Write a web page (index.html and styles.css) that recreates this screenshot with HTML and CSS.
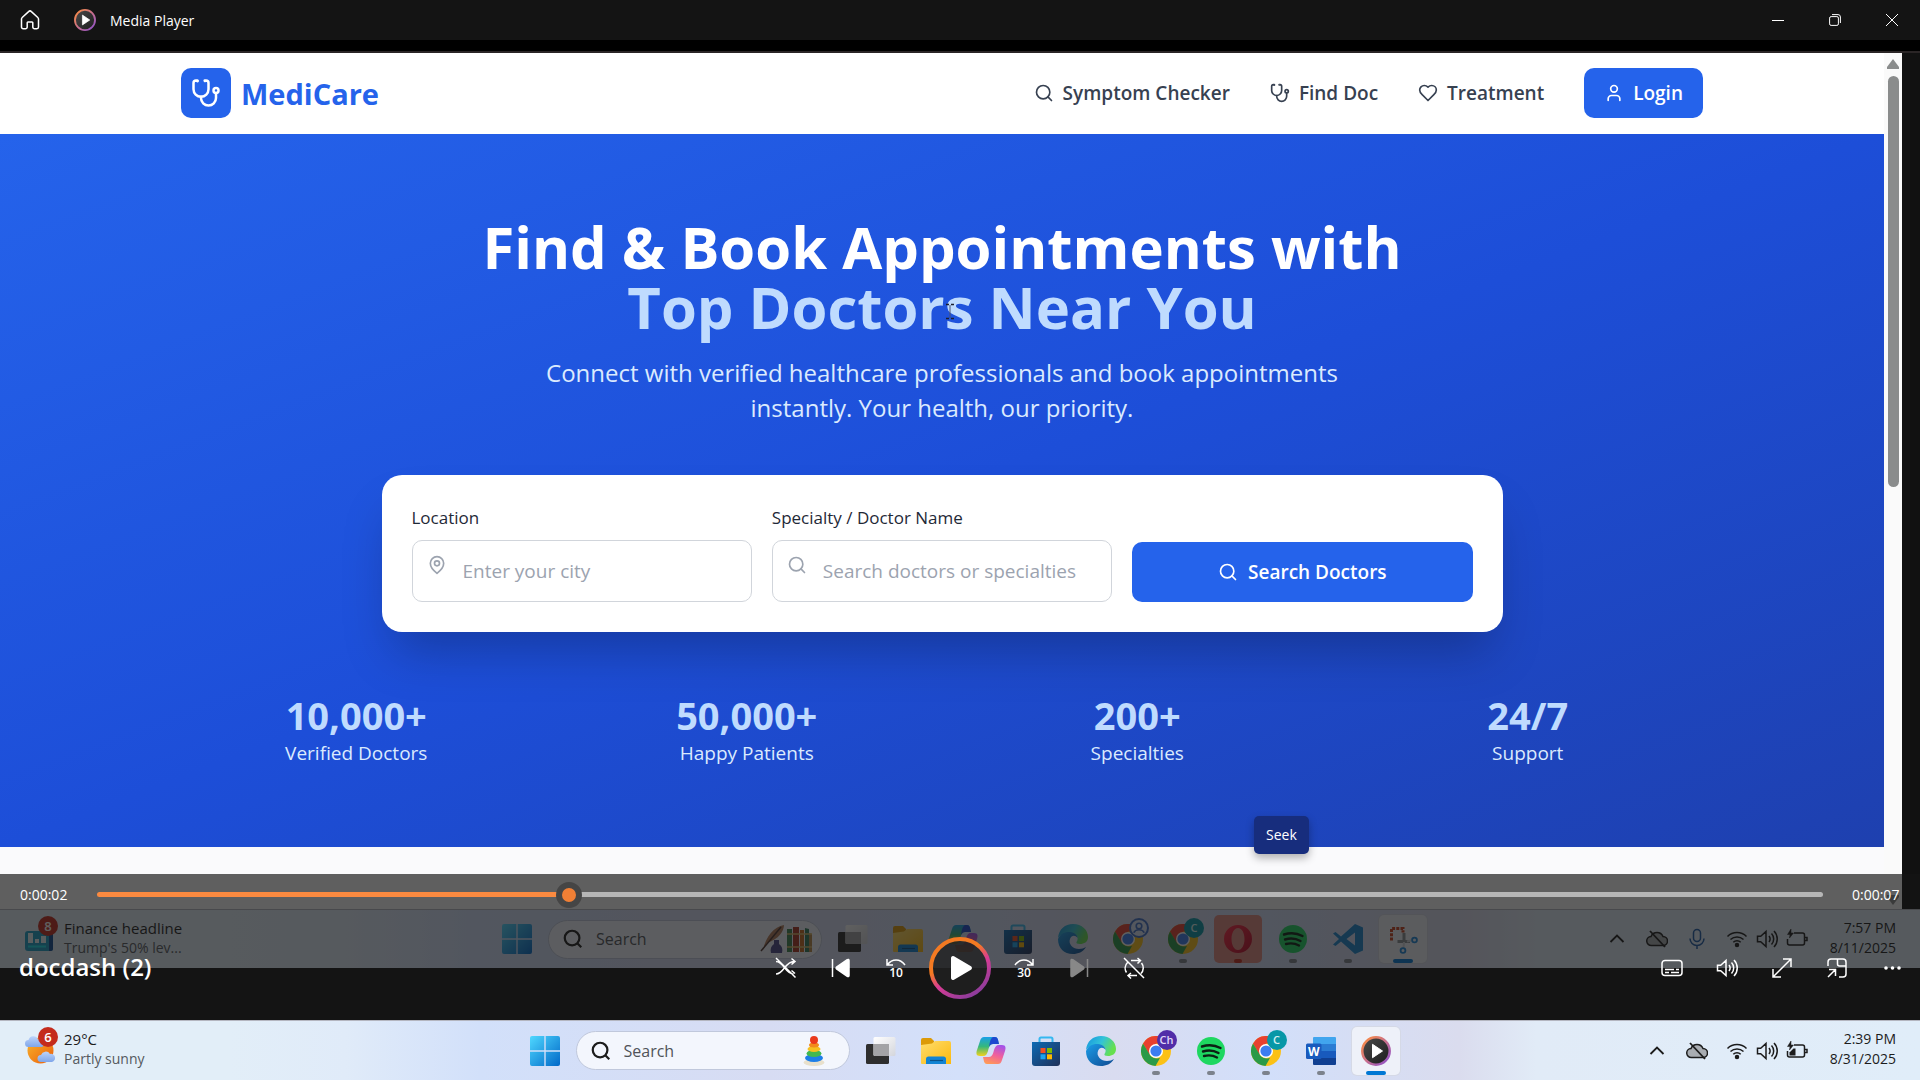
FILE: index.html
```html
<!DOCTYPE html>
<html lang="en">
<head>
<meta charset="utf-8">
<title>Media Player</title>
<link rel="stylesheet" href="styles.css">
</head>
<body>
<svg class="sprite" aria-hidden="true">
  <defs>
    <linearGradient id="g-ring" x1="0" y1="0" x2="1" y2="1"><stop offset="0" stop-color="#ff8f3c"/><stop offset=".5" stop-color="#c9708c"/><stop offset="1" stop-color="#8a4fd0"/></linearGradient>
    <linearGradient id="g-dark" x1="0" y1="0" x2="1" y2="1"><stop offset="0" stop-color="#4a4a4a"/><stop offset="1" stop-color="#1c1c1c"/></linearGradient>
    <linearGradient id="g-playtop" x1=".1" y1="0" x2=".7" y2="1"><stop offset="0" stop-color="#f47a22"/><stop offset=".4" stop-color="#f47a22"/><stop offset=".62" stop-color="#d83c94"/><stop offset="1" stop-color="#8c3c9c"/></linearGradient>
    <linearGradient id="g-win" x1="0" y1="0" x2="1" y2="1"><stop offset="0" stop-color="#4fd8ff"/><stop offset="1" stop-color="#0068c8"/></linearGradient>
    <linearGradient id="g-fold" x1="0" y1="0" x2="1" y2="1"><stop offset="0" stop-color="#ffdd6e"/><stop offset="1" stop-color="#fbb90e"/></linearGradient>
    <linearGradient id="g-store" x1="0" y1="0" x2="1" y2="1"><stop offset="0" stop-color="#0d6ab4"/><stop offset="1" stop-color="#203058"/></linearGradient>
    <linearGradient id="g-edge1" x1="0" y1="0" x2="1" y2=".4"><stop offset="0" stop-color="#1593e0"/><stop offset=".55" stop-color="#33c3d8"/><stop offset="1" stop-color="#66e04e"/></linearGradient>
    <linearGradient id="g-edge2" x1="0" y1="0" x2="1" y2="1"><stop offset="0" stop-color="#1b9de8"/><stop offset="1" stop-color="#0f4a92"/></linearGradient>
    <linearGradient id="g-cop1" x1="0" y1="0" x2="0" y2="1"><stop offset="0" stop-color="#19a0e8"/><stop offset=".5" stop-color="#36b87c"/><stop offset="1" stop-color="#f2d21c"/></linearGradient>
    <linearGradient id="g-cop2" x1=".7" y1="0" x2=".3" y2="1"><stop offset="0" stop-color="#a552e8"/><stop offset=".5" stop-color="#f0609c"/><stop offset="1" stop-color="#ff9a58"/></linearGradient>
    <linearGradient id="g-sun" x1="0" y1="0" x2="1" y2="1"><stop offset="0" stop-color="#f8b62c"/><stop offset="1" stop-color="#ec5e0c"/></linearGradient>
    <linearGradient id="g-cloud" x1="0" y1="0" x2="0" y2="1"><stop offset="0" stop-color="#bcd3fa"/><stop offset="1" stop-color="#7fa6ea"/></linearGradient>
    <linearGradient id="g-opera" x1="0" y1="0" x2="1" y2="1"><stop offset="0" stop-color="#ff2440"/><stop offset="1" stop-color="#b80a28"/></linearGradient>
    <linearGradient id="g-pane" x1="0" y1="0" x2="1" y2="1"><stop offset="0" stop-color="#ffffff"/><stop offset="1" stop-color="#d4d6dc"/></linearGradient>
  </defs>

  <symbol id="i-steth" viewBox="0 0 24 24"><path d="M4.8 2.3A.3.3 0 1 0 5 2H4a2 2 0 0 0-2 2v5a6 6 0 0 0 12 0V4a2 2 0 0 0-2-2h-1a.2.2 0 1 0 .3.3"/><path d="M8 15v1a6 6 0 0 0 12 0v-4"/><circle cx="20" cy="10" r="2"/></symbol>
  <symbol id="i-search" viewBox="0 0 24 24"><circle cx="11" cy="11" r="8"/><path d="m21 21-4.3-4.3"/></symbol>
  <symbol id="i-heart" viewBox="0 0 24 24"><path d="M19 14c1.49-1.46 3-3.21 3-5.5A5.5 5.5 0 0 0 16.500 3c-1.76 0-3 .5-4.500 2-1.500-1.500-2.740-2-4.500-2A5.500 5.500 0 0 0 2 8.500c0 2.300 1.500 4.050 3 5.500l7 7Z"/></symbol>
  <symbol id="i-user" viewBox="0 0 24 24"><path d="M19 21v-2a4 4 0 0 0-4-4H9a4 4 0 0 0-4 4v2"/><circle cx="12" cy="7" r="4"/></symbol>
  <symbol id="i-pin" viewBox="0 0 24 24"><path d="M20 10c0 6-8 12-8 12s-8-6-8-12a8 8 0 0 1 16 0Z"/><circle cx="12" cy="10" r="3"/></symbol>

  <symbol id="i-home" viewBox="0 0 20 20"><path d="M8.600 1.600a2 2 0 0 1 2.800 0l6.400 5.900a2 2 0 0 1 .7 1.500v8a1.700 1.700 0 0 1-1.700 1.700h-2.300a1.700 1.700 0 0 1-1.700-1.700v-4.200a.8.800 0 0 0-.8-.8H8a.8.800 0 0 0-.8.800V17a1.700 1.700 0 0 1-1.700 1.700H3.200A1.700 1.700 0 0 1 1.500 17V9a2 2 0 0 1 .7-1.500Z"/></symbol>
  <symbol id="i-media" viewBox="0 0 30 30"><circle cx="15" cy="15" r="13.700" fill="url(#g-dark)" stroke="url(#g-ring)" stroke-width="2.500"/><path d="M11.500 8.300v13.400L21.500 15Z" fill="#fff" stroke="#fff" stroke-linejoin="round"/></symbol>

  <symbol id="i-shuffle" viewBox="0 0 22 22"><path d="M1 4.500c8 0 9 12.500 17.500 12.500M1 17c8 0 9-12.500 18-12.500M16.500 1.500l3.500 3-3.500 3M16.500 13.500l3.500 3M1 1l19.500 19.500"/></symbol>
  <symbol id="i-prev" viewBox="0 0 22 22"><path d="M2.500 2v18"/><path d="M19 3.500v15a1 1 0 0 1-1.700.8L6.500 11.900a1.200 1.200 0 0 1 0-1.800L17.300 2.700a1 1 0 0 1 1.700.8Z" fill="currentColor"/></symbol>
  <symbol id="i-repeat" viewBox="0 0 22 22"><path d="M8 3.500h9M14.500 1l3 2.500-3 3M14 18.500H5.500M8 16l-3 2.500 3 3M4.500 5.500a8 8 0 0 0-1 10M18.500 6a8 8 0 0 1-.5 10.500M1 1l20 20"/></symbol>
  <symbol id="i-subs" viewBox="0 0 22 22"><rect x="1" y="3.500" width="20" height="15" rx="3"/><path d="M4 12.500h9M15 12.500h3M4 15.500h4M10 15.500h8"/></symbol>
  <symbol id="i-vol" viewBox="0 0 22 22"><path d="M1.500 8.300h3.200L10 3.500v15l-5.300-4.800H1.500ZM13 8a5 5 0 0 1 0 6M15.500 5.500a8 8 0 0 1 0 11M18 3a11.500 11.500 0 0 1 0 16"/></symbol>
  <symbol id="i-full" viewBox="0 0 22 22"><path d="M12 2h8v8M2 12v8h8M20 2L2 20"/></symbol>
  <symbol id="i-mini" viewBox="0 0 22 22"><path d="M2 9V5a3 3 0 0 1 3-3h12a3 3 0 0 1 3 3v12a3 3 0 0 1-3 3h-4M11.500 2v5a2 2 0 0 0 2 2H20M3 12.500h6.500V19M9.500 12.500L2 20"/></symbol>
  <symbol id="i-dots" viewBox="0 0 22 22"><g fill="currentColor" stroke="none"><circle cx="5" cy="11" r="1.800"/><circle cx="11.500" cy="11" r="1.800"/><circle cx="18" cy="11" r="1.800"/></g></symbol>

  <symbol id="t-win" viewBox="0 0 30 30"><path fill="url(#g-win)" d="M2 0h12.300v14.300H0V2a2 2 0 0 1 2-2ZM15.700 0H28a2 2 0 0 1 2 2v12.300H15.700ZM0 15.700h14.300V30H2a2 2 0 0 1-2-2ZM15.700 15.700H30V28a2 2 0 0 1-2 2H15.700Z"/></symbol>
  <symbol id="t-task" viewBox="0 0 30 30"><rect x="0" y="8" width="23" height="20" rx="1.500" fill="#2e2e2e"/><rect x="7.500" y="1" width="22" height="19" rx="1.500" fill="url(#g-pane)"/><path d="M7.500 8H23v12H9a1.500 1.500 0 0 1-1.500-1.500Z" fill="#a3a3a6"/></symbol>
  <symbol id="t-folder" viewBox="0 0 30 30"><path d="M0 4a2 2 0 0 1 2-2h8l3 3v5H0Z" fill="#dc9a08"/><path d="M0 9l11-1.500 3-2.500h14a2 2 0 0 1 2 2v21H1a1 1 0 0 1-1-1Z" fill="url(#g-fold)"/><path d="M5 28v-5a2.500 2.500 0 0 1 2.500-2.500h15A2.500 2.500 0 0 1 25 23v5Z" fill="#1284d4"/><path d="M9 24.500h13" stroke="#0b5288" stroke-width="1.200"/></symbol>
  <symbol id="t-copilot" viewBox="0 0 30 30"><path d="M8 1h11c3 0 3 3 4 7h-6c-3 0-4 3-5 7-1 3-2 5-5 5H4c-4 0-4-3-3-6l3-9c1-3 2-4 4-4Z" fill="url(#g-cop1)"/><path d="M17 1h2c3 0 3 3 4 7h-6c-2 0-3 1-4 3 1-5 1-8 4-10Z" fill="#1c48d0"/><path d="M22 28H11c-3 0-3-3-4-7h6c3 0 4-3 5-7 1-3 2-5 5-5h3c4 0 4 3 3 6l-3 9c-1 3-2 4-4 4Z" fill="url(#g-cop2)"/></symbol>
  <symbol id="t-store" viewBox="0 0 30 30"><path d="M8.500 6V3A1.500 1.500 0 0 1 10 1.500h10A1.500 1.500 0 0 1 21.500 3v3" fill="none" stroke="#35b8f0" stroke-width="2"/><path d="M1 6h28v21a3 3 0 0 1-3 3H4a3 3 0 0 1-3-3Z" fill="url(#g-store)"/><path fill="#f25022" d="M9.500 12h5v5h-5z"/><path fill="#7fba00" d="M16 12h5v5h-5z"/><path fill="#1ba4f0" d="M9.500 18.300h5v5h-5z"/><path fill="#ffb900" d="M16 18.300h5v5h-5z"/></symbol>
  <symbol id="t-edge" viewBox="0 0 30 30"><path d="M0 14C1 5 7 0 15 0c9 0 15 6 15 13 0 5-4 7-8 7-3 0-4-1-3.500-2 3-4 0-9-6-9C7 9 2 11 0 14Z" fill="url(#g-edge1)"/><path d="M0 15c2-5 7-7.500 12-7 4.500.500 7.500 3 7.500 6-2-3-6-3-7.500 1-2 5 3 10 9 10 3 0 5-1 7-2-3 5-8 7-13 7C6 30 0 24 0 15Z" fill="url(#g-edge2)"/></symbol>
  <symbol id="t-chrome" viewBox="0 0 30 30"><circle cx="15" cy="15" r="15" fill="#fbc116"/><path d="M2 7.500A15 15 0 0 1 28 7.500H15L8.500 19Z" fill="#e8402f"/><path d="M2 7.500l7 11.500c2 3 6 4 10 3L14.500 30A15 15 0 0 1 2 7.500Z" fill="#2a9a48"/><circle cx="15" cy="15" r="7" fill="#fff"/><circle cx="15" cy="15" r="5.600" fill="#3b7df0"/></symbol>
  <symbol id="t-spotify" viewBox="0 0 30 30"><circle cx="15" cy="15" r="14" fill="#1ed760"/><path d="M6 10.500c6-2 13-1.500 18.500 1.500M7 15.500c5-1.500 11-1 15.500 1.500M8 20c4-1 9-.8 13 1.500" fill="none" stroke="#0c2014" stroke-width="2.400" stroke-linecap="round"/></symbol>
  <symbol id="t-opera" viewBox="0 0 30 30"><path fill-rule="evenodd" fill="url(#g-opera)" d="M15 1a14 14 0 1 1 0 28a14 14 0 1 1 0-28ZM15 4c-4 0-6.500 5-6.500 11S11 26 15 26s6.500-5 6.500-11S19 4 15 4Z"/></symbol>
  <symbol id="t-vscode" viewBox="0 0 30 30"><path fill="#1a86d0" d="M22 0l8 3.500v23L22 30 8 17.500 2.500 22 0 20.500 6 15 0 9.500 2.500 8 8 12.500ZM22 8.500L13.500 15 22 21.500Z" fill-rule="evenodd"/></symbol>
  <symbol id="t-snip" viewBox="0 0 30 30"><path d="M3.500 16.500v-12h11.500v4" fill="none" stroke="#c8401c" stroke-width="3" stroke-dasharray="3 1.200"/><path d="M16 9v9M9.500 17.500H22" fill="none" stroke="#8a8f94" stroke-width="3"/><path d="M16 18l-.5 6M19 17.500l4-1" stroke="#d0d4d8" stroke-width="2"/><circle cx="15" cy="26.500" r="2.400" fill="none" stroke="#1b86d8" stroke-width="1.800"/><circle cx="26.500" cy="16" r="2.400" fill="none" stroke="#1b86d8" stroke-width="1.800"/></symbol>
  <symbol id="t-finance" viewBox="0 0 30 30"><rect x="0" y="8" width="28" height="20" rx="3" fill="#1aa0c8"/><path d="M24 8h2a2 2 0 0 1 2 2v16a2 2 0 0 1-2 2h-2Z" fill="#0d4a94"/><path d="M3 10h5v10H3zM10 16h4v4h-4zM16 13h5v7h-5z" fill="#e8f4f8"/><path d="M3 23.500h18" stroke="#18e0e8" stroke-width="2"/></symbol>
  <symbol id="t-weather" viewBox="0 0 30 30"><circle cx="15.500" cy="16.500" r="13" fill="url(#g-sun)"/><path d="M3.500 13a3.500 3.500 0 0 1 0-7 5 5 0 0 1 9.500-.5A4 4 0 0 1 17 13Z" fill="url(#g-cloud)"/><path d="M16 28a3.500 3.500 0 0 1 0-7 5 5 0 0 1 9-1 4 4 0 0 1 2 8Z" fill="url(#g-cloud)"/></symbol>
  <symbol id="t-toy" viewBox="0 0 22 30"><ellipse cx="11" cy="26.500" rx="10.500" ry="3.500" fill="#e8e0cc"/><ellipse cx="11" cy="22" rx="9" ry="4" fill="#1c7ee8"/><ellipse cx="11" cy="17.500" rx="7.500" ry="3.500" fill="#42b850"/><ellipse cx="11" cy="13" rx="6.500" ry="3" fill="#f5c020"/><ellipse cx="11" cy="9" rx="5" ry="2.500" fill="#f28a1c"/><circle cx="11" cy="4" r="4" fill="#ea3a1c"/></symbol>
  <symbol id="t-books" viewBox="0 0 52 30"><path d="M3 26C6 12 14 3 24 1c0 6-5 14-17 18Z" fill="#b07a58"/><path d="M1 27L21 3" stroke="#4c3430" stroke-width="1.500"/><path d="M14 16h5v4c3 2 4 5 3 9H11c-1-4 0-7 3-9Z" fill="#4d4888"/><path fill="#3c8450" d="M27 5h5v23h-5z"/><path fill="#a83420" d="M33 3h6v25h-6z"/><path fill="#c8681c" d="M40 6h4v22h-4z"/><path fill="#2f7a58" d="M45 4l4 1v23h-4z"/><path fill="#b88848" d="M49 9l3 1v18h-3z"/><path d="M27 10h25M27 23h25" stroke="#d8b868" stroke-width="1.500"/></symbol>

  <symbol id="s-chev" viewBox="0 0 22 22"><path d="M4.500 14L11 7.500 17.500 14" stroke-width="1.800"/></symbol>
  <symbol id="s-cloud" viewBox="0 0 22 22"><path d="M5.500 17.500a4.500 4.500 0 0 1-.5-9 6.500 6.500 0 0 1 12 0 4.500 4.500 0 0 1 0 9Z" fill="#a9adb2"/><path d="M4 3l15 16" stroke-width="1.800"/></symbol>
  <symbol id="s-mic" viewBox="0 0 22 22"><rect x="7.500" y="1.500" width="7" height="12" rx="3.500"/><path d="M4 10.500a7 7 0 0 0 14 0M11 17.500v3.500"/></symbol>
  <symbol id="s-wifi" viewBox="0 0 22 22"><path d="M1.500 8.500a13.500 13.500 0 0 1 19 0M4.500 11.500a9.500 9.500 0 0 1 13 0M7.300 14.300a5.500 5.500 0 0 1 7.400 0"/><circle cx="11" cy="17" r="1.500" fill="currentColor"/></symbol>
  <symbol id="s-batt" viewBox="0 0 22 22"><path d="M8 5h8.500a2 2 0 0 1 2 2v8a2 2 0 0 1-2 2h-13a2 2 0 0 1-2-2v-4M19 9.500h2v3h-2"/><path d="M5 1L1.500 6.500H4L3.500 10 7.500 5H5Z" fill="currentColor" stroke-width=".5"/></symbol>
</svg>

<header class="titlebar">
  <button class="tb-home" aria-label="Home"><svg class="ln s20"><use href="#i-home"/></svg></button>
  <svg class="s22"><use href="#i-media"/></svg>
  <span class="tb-name">Media Player</span>
  <div class="tb-win">
    <button aria-label="Minimize"><svg viewBox="0 0 12 12" class="ln s12"><path d="M0 6.500h12"/></svg></button>
    <button aria-label="Restore"><svg viewBox="0 0 12 12" class="ln s12"><rect x=".6" y="2.600" width="8.800" height="8.800" rx="1.500"/><path d="M3 .6h6a2.400 2.400 0 0 1 2.400 2.400v6"/></svg></button>
    <button aria-label="Close"><svg viewBox="0 0 12 12" class="ln s12"><path d="M0 0l12 12M12 0L0 12"/></svg></button>
  </div>
</header>

<main class="stage">
  <div class="video">
    <div class="browser">
      <div class="page">
        <header class="site-head">
          <div class="wrap head-row">
            <a class="brand" href="#"><span class="brand-box"><svg class="lu s30"><use href="#i-steth"/></svg></span>MediCare</a>
            <nav class="nav">
              <a href="#"><svg class="lu s20"><use href="#i-search"/></svg>Symptom Checker</a>
              <a href="#"><svg class="lu s20"><use href="#i-steth"/></svg>Find Doc</a>
              <a href="#"><svg class="lu s20"><use href="#i-heart"/></svg>Treatment</a>
              <button class="login"><svg class="lu s20"><use href="#i-user"/></svg>Login</button>
            </nav>
          </div>
        </header>
        <section class="hero">
          <div class="wrap">
            <h1>Find &amp; Book Appointments with<span>Top Doctors Near You</span></h1>
            <p class="lead">Connect with verified healthcare professionals and book appointments instantly. Your health, our priority.</p>
            <form class="finder">
              <div class="field"><label for="city">Location</label>
                <div class="box"><svg class="lu s20"><use href="#i-pin"/></svg><input id="city" type="text" placeholder="Enter your city"></div></div>
              <div class="field"><label for="doc">Specialty / Doctor Name</label>
                <div class="box"><svg class="lu s20"><use href="#i-search"/></svg><input id="doc" type="text" placeholder="Search doctors or specialties"></div></div>
              <button class="go" type="button"><svg class="lu s20"><use href="#i-search"/></svg>Search Doctors</button>
            </form>
            <dl class="stats">
              <div><dt>10,000+</dt><dd>Verified Doctors</dd></div>
              <div><dt>50,000+</dt><dd>Happy Patients</dd></div>
              <div><dt>200+</dt><dd>Specialties</dd></div>
              <div><dt>24/7</dt><dd>Support</dd></div>
            </dl>
          </div>
          <svg class="ibeam" viewBox="0 0 8 17"><path d="M4 2v13" stroke="#4a5270"/><path d="M0 1.500h3M5 1.500h3M0 15.500h3M5 15.500h3" stroke="#1c2030" stroke-width="1.500"/></svg>
        </section>
      </div>
      <div class="scroll">
        <svg viewBox="0 0 12 10"><path d="M6 0l6 8v2H0V8Z"/></svg>
        <i></i>
        <svg viewBox="0 0 12 10" class="down"><path d="M6 10l6-8V0H0v2Z"/></svg>
      </div>
      <div class="edge"></div>
    </div>

    <div class="taskbar recorded">
      <div class="widget"><svg class="s30"><use href="#t-finance"/></svg><b class="badge">8</b><p><span>Finance headline</span><small>Trump's 50% lev...</small></p></div>
      <div class="apps">
        <button aria-label="Start"><svg class="s30"><use href="#t-win"/></svg></button>
        <label class="find"><svg class="s22 mag"><use href="#i-search"/></svg><input type="search" placeholder="Search" aria-label="Search"><svg class="books"><use href="#t-books"/></svg></label>
        <button aria-label="Task view"><svg class="s30"><use href="#t-task"/></svg></button>
        <button aria-label="Files"><svg class="s30"><use href="#t-folder"/></svg></button>
        <button aria-label="Copilot"><svg class="s30"><use href="#t-copilot"/></svg></button>
        <button aria-label="Store"><svg class="s30"><use href="#t-store"/></svg></button>
        <button aria-label="Edge"><svg class="s30"><use href="#t-edge"/></svg></button>
        <button aria-label="Chrome"><svg class="s30"><use href="#t-chrome"/></svg><span class="av ring"><svg viewBox="0 0 20 20"><circle cx="10" cy="7.500" r="3.500"/><path d="M3.500 16c2-5 11-5 13 0"/></svg></span></button>
        <button aria-label="Chrome" class="run"><svg class="s30"><use href="#t-chrome"/></svg><span class="av teal">C</span></button>
        <button aria-label="Opera" class="run alert"><svg class="s30"><use href="#t-opera"/></svg></button>
        <button aria-label="Spotify" class="run"><svg class="s30"><use href="#t-spotify"/></svg></button>
        <button aria-label="Code" class="run"><svg class="s30"><use href="#t-vscode"/></svg></button>
        <button aria-label="Snipping Tool" class="run active"><svg class="s30"><use href="#t-snip"/></svg></button>
      </div>
      <div class="tray">
        <svg class="ln s22"><use href="#s-chev"/></svg><svg class="ln s22"><use href="#s-cloud"/></svg><svg class="ln s22 mic"><use href="#s-mic"/></svg>
        <div class="sys"><svg class="ln s22"><use href="#s-wifi"/></svg><svg class="ln s22"><use href="#i-vol"/></svg><svg class="ln s22"><use href="#s-batt"/></svg></div>
        <time>7:57 PM<br>8/11/2025</time>
      </div>
    </div>
  </div>

  <div class="tip" role="tooltip">Seek</div>
  <div class="controls">
    <div class="seek"><span>0:00:02</span><input type="range" min="0" max="1000" value="270" aria-label="Seek"><span>0:00:07</span></div>
    <div class="deck">
      <strong>docdash (2)</strong>
      <div class="keys">
        <button aria-label="Shuffle"><svg class="ln s22"><use href="#i-shuffle"/></svg></button>
        <button aria-label="Previous"><svg class="ln s22"><use href="#i-prev"/></svg></button>
        <button aria-label="Back 10 seconds"><svg class="ln s22" viewBox="0 0 22 22"><path d="M2 2v6h6M2.500 7.500C7 1.500 15 1 20 8"/><text x="11" y="20" class="glyph-num" text-anchor="middle">10</text></svg></button>
        <button aria-label="Play" class="play"><svg viewBox="0 0 62 62"><circle cx="31" cy="31" r="29" fill="#202020" fill-opacity=".8" stroke="url(#g-playtop)" stroke-width="4"/><path d="M22 21v20a2 2 0 0 0 3 1.700l17-10a2 2 0 0 0 0-3.400l-17-10a2 2 0 0 0-3 1.700Z" fill="#fff"/></svg></button>
        <button aria-label="Forward 30 seconds"><svg class="ln s22" viewBox="0 0 22 22"><path d="M20 2v6h-6M19.500 7.500C15 1.500 7 1 2 8"/><text x="11" y="20" class="glyph-num" text-anchor="middle">30</text></svg></button>
        <button aria-label="Next" disabled class="next"><svg class="ln s22"><use href="#i-prev"/></svg></button>
        <button aria-label="Repeat"><svg class="ln s22"><use href="#i-repeat"/></svg></button>
      </div>
      <div class="keys end">
        <button aria-label="Subtitles"><svg class="ln s22"><use href="#i-subs"/></svg></button>
        <button aria-label="Volume"><svg class="ln s22"><use href="#i-vol"/></svg></button>
        <button aria-label="Full screen"><svg class="ln s22"><use href="#i-full"/></svg></button>
        <button aria-label="Mini player"><svg class="ln s22"><use href="#i-mini"/></svg></button>
        <button aria-label="More"><svg class="ln s22"><use href="#i-dots"/></svg></button>
      </div>
    </div>
  </div>
</main>

<footer class="taskbar">
  <div class="widget"><svg class="s30"><use href="#t-weather"/></svg><b class="badge">6</b><p><span>29°C</span><small>Partly sunny</small></p></div>
  <div class="apps">
    <button aria-label="Start"><svg class="s30"><use href="#t-win"/></svg></button>
    <label class="find"><svg class="s22 mag"><use href="#i-search"/></svg><input type="search" placeholder="Search" aria-label="Search"><svg class="toy"><use href="#t-toy"/></svg></label>
    <button aria-label="Task view"><svg class="s30"><use href="#t-task"/></svg></button>
    <button aria-label="Files"><svg class="s30"><use href="#t-folder"/></svg></button>
    <button aria-label="Copilot"><svg class="s30"><use href="#t-copilot"/></svg></button>
    <button aria-label="Store"><svg class="s30"><use href="#t-store"/></svg></button>
    <button aria-label="Edge"><svg class="s30"><use href="#t-edge"/></svg></button>
    <button aria-label="Chrome" class="run"><svg class="s30"><use href="#t-chrome"/></svg><span class="av purple">Ch</span></button>
    <button aria-label="Spotify" class="run"><svg class="s30"><use href="#t-spotify"/></svg></button>
    <button aria-label="Chrome" class="run"><svg class="s30"><use href="#t-chrome"/></svg><span class="av teal">C</span></button>
    <button aria-label="Word" class="run"><svg class="s30" viewBox="0 0 30 30"><path fill="#41a5ee" d="M8 1h21a1 1 0 0 1 1 1v6H7V2a1 1 0 0 1 1-1Z"/><path fill="#2b7cd3" d="M7 8h23v7H7z"/><path fill="#185abd" d="M7 15h23v7H7z"/><path fill="#103f91" d="M7 22h23v6a1 1 0 0 1-1 1H8a1 1 0 0 1-1-1Z"/><rect y="7.500" width="15.500" height="15.500" rx="1.500" fill="#185abd"/><text x="7.700" y="19.500" text-anchor="middle" class="word-w">W</text></svg></button>
    <button aria-label="Media Player" class="run active"><svg class="s30"><use href="#i-media"/></svg></button>
  </div>
  <div class="tray">
    <svg class="ln s22"><use href="#s-chev"/></svg><svg class="ln s22"><use href="#s-cloud"/></svg>
    <div class="sys"><svg class="ln s22"><use href="#s-wifi"/></svg><svg class="ln s22"><use href="#i-vol"/></svg><svg class="ln s22" viewBox="0 0 22 22"><use href="#s-batt"/><path d="M3.500 15.500v-3l4-4h2v7Z" fill="currentColor" stroke="none"/></svg></div>
    <time>2:39 PM<br>8/31/2025</time>
  </div>
</footer>
</body>
</html>
```
FILE: styles.css
```css
* { box-sizing: border-box; margin: 0; }
body {
  min-height: 100vh;
  display: flex;
  flex-direction: column;
  background: #141414;
  color: #fff;
  font-family: "Open Sans", "Noto Sans", sans-serif;
  font-size: 14px;
  overflow: hidden;
}
button { border: 0; padding: 0; background: none; color: inherit; font: inherit; display: flex; align-items: center; justify-content: center; }
input { font: inherit; border: 0; outline: 0; background: none; }
a { color: inherit; text-decoration: none; }
svg { display: block; flex: none; }
.sprite { position: absolute; width: 0; height: 0; }
.ln { fill: none; stroke: currentColor; stroke-width: 1.5; color: inherit; }
.lu { fill: none; stroke: currentColor; stroke-width: 2; stroke-linecap: round; stroke-linejoin: round; }
.s12 { width: 12px; height: 12px; overflow: visible; stroke-width: 1; }
.s20 { width: 20px; height: 20px; }
.s22 { width: 22px; height: 22px; }
.s30 { width: 30px; height: 30px; }
.glyph-num { font: 600 12px "Open Sans", sans-serif; fill: currentColor; stroke: none; }
.word-w { font: 700 12px "Open Sans", sans-serif; fill: #fff; }

/* window title bar */
.titlebar { height: 40px; flex: none; display: flex; align-items: center; padding-left: 20px; }
.tb-home { margin-right: 34px; }
.tb-name { margin-left: 14px; font-size: 14px; }
.tb-win { margin-left: auto; display: flex; }
.tb-win button { width: 57px; height: 40px; }

/* video surface */
.stage { position: relative; flex: 1; display: flex; flex-direction: column; padding-bottom: 52px; }
.video { flex: 1; display: flex; flex-direction: column; background: #000; padding-top: 11px; }
.browser { flex: 1; display: flex; background: #fafafc; border-top: 2px solid #2a2526; }
.page { flex: 1; }
.scroll { width: 18px; background: #fafafa; display: flex; flex-direction: column; align-items: center; padding: 6px 0 4px; }
.scroll svg { width: 12px; height: 10px; fill: #8a8c8c; }
.scroll i { width: 11px; height: 411px; margin: 7px 0 auto; border-radius: 6px; background: #8a8c8c; }
.edge { width: 18px; background: #111; }

.wrap { max-width: 1602px; margin: 0 auto; padding: 0 40px; }
.site-head { background: #fff; color: #374151; padding: 15px 0 16px; }
.head-row { display: flex; align-items: center; justify-content: space-between; }
.brand { display: flex; align-items: center; gap: 10px; font-size: 29px; font-weight: 700; color: #2563eb; }
.brand-box { width: 50px; height: 50px; border-radius: 10px; background: #2563eb; color: #fff; display: grid; place-items: center; }
.nav { display: flex; align-items: center; gap: 40px; font-size: 19px; font-weight: 600; }
.nav a { display: flex; align-items: center; gap: 9px; }
.login { gap: 9px; height: 50px; padding: 0 20px; border-radius: 10px; background: #2563eb; color: #fff; }

.hero { position: relative; padding: 83px 0 79px; background: linear-gradient(to bottom right, #2563eb, #1d4ed8 50%, #1e40af); text-align: center; }
h1 { font-size: 58px; line-height: 60px; font-weight: 700; }
h1 span { display: block; color: #bfdbfe; }
.lead { max-width: 840px; margin: 18px auto 50px; font-size: 24px; line-height: 35px; color: #dbeafe; }
.finder { max-width: 1121px; margin: 0 auto 60px; padding: 30px; display: grid; grid-template-columns: repeat(3, 1fr); gap: 20px; align-items: end; background: #fff; border-radius: 20px; text-align: left; box-shadow: 0 30px 50px -12px rgba(0, 0, 0, .25); }
.field label { display: block; margin-bottom: 10px; font-size: 17px; line-height: 25px; font-weight: 500; color: #1f2937; }
.box { position: relative; color: #9ca3af; }
.box svg { position: absolute; left: 15px; top: 15px; }
.box input { display: block; width: 100%; height: 62px; padding: 0 20px 0 50px; border: 1px solid #d1d5db; border-radius: 10px; font-size: 19px; color: #111827; }
.box input::placeholder { color: #9ca3af; }
.go { height: 60px; gap: 10px; border-radius: 10px; background: #2563eb; font-size: 19px; font-weight: 600; }
.stats { display: grid; grid-template-columns: repeat(4, 1fr); gap: 40px; }
.stats dt { font-size: 38px; line-height: 46px; font-weight: 700; color: #bfdbfe; }
.stats dd { font-size: 19px; line-height: 30px; color: #dbeafe; }
.ibeam { position: absolute; left: 946px; top: 169px; width: 8px; height: 17px; }

/* player controls over the picture */
.tip { position: absolute; left: 1254px; bottom: 166px; padding: 0 12px; line-height: 38px; border-radius: 5px; background: #172d7d; box-shadow: 0 4px 8px rgba(0, 0, 0, .3); }
.controls { position: absolute; inset: auto 0 0; height: 146px; background: rgba(20, 20, 20, .68); }
.seek { display: flex; align-items: center; padding: 8px 20px 0; height: 33px; }
.seek span { width: 48px; white-space: nowrap; }
.seek input { flex: 1; height: 26px; margin: 0 29px; appearance: none; }
.seek input::-webkit-slider-runnable-track { height: 5px; border-radius: 3px; background: linear-gradient(90deg, #fb8a40 27%, #b6b6b6 27%); }
.seek input::-webkit-slider-thumb { appearance: none; width: 26px; height: 26px; margin-top: -10px; border-radius: 50%; border: 6px solid #454545; background: #f07f35; }
.deck { display: grid; grid-template-columns: 1fr auto 1fr; align-items: center; padding: 30px 8px 0; }
.deck strong { padding: 0 0 2px 11px; font-size: 24px; font-weight: 600; line-height: 30px; }
.keys { display: flex; align-items: center; gap: 15px; }
.keys button { width: 40px; height: 40px; }
.keys .play { width: 62px; height: 62px; margin: 0 -2px; }
.play svg { width: 62px; height: 62px; }
.keys .next { color: #888; transform: scaleX(-1); }
.end { justify-content: flex-end; }

/* task bar */
.taskbar { flex: none; height: 60px; display: grid; grid-template-columns: 1fr auto 1fr; align-items: center; color: #1c1c1c; border-top: 1px solid #b4b6c0; background: linear-gradient(90deg, #e2eef8 0 12%, #e0ebf9 18%, #d2e0fa 25%, #d7dcf3 40%, #d3e0fa 50%, #d9dcf0 58%, #d2dffa 66%, #dadcee 76%, #e1ebf7 80%, #e0edf9); }
.taskbar.recorded { height: 59px; }
.widget { position: relative; display: flex; align-items: center; gap: 9px; padding: 0 0 3px 25px; line-height: 20px; }
.widget p { display: flex; flex-direction: column; }
.widget span, .widget small { font-size: 15px; }
.widget small { color: #55595e; font-size: 14px; }
.badge { position: absolute; left: 38px; top: -2px; width: 20px; height: 20px; border-radius: 50%; background: #c42b1c; color: #fff; font-size: 13px; font-weight: 600; text-align: center; }
.apps { display: flex; align-items: center; gap: 7px; }
.apps button { position: relative; width: 48px; height: 48px; border-radius: 5px; }
.find { display: flex; align-items: center; width: 274px; height: 39px; padding: 0 13px; gap: 10px; border-radius: 20px; border: 1px solid #c0c8dc; background: #f3f6fd; }
.find input { flex: 1; min-width: 0; font-size: 16px; }
.find input::placeholder { color: #505359; }
.mag { fill: none; stroke: #1c1c1c; stroke-width: 2.4; }
.toy { width: 22px; height: 30px; margin-right: 11px; }
.books { width: 52px; height: 30px; margin-right: -4px; }
.run::after { content: ""; position: absolute; bottom: 0; left: 20px; width: 8px; height: 4px; border-radius: 2px; background: #7c828c; }
.active { background: #eef1f9; box-shadow: 0 0 0 1px #d5d9e6; }
.active::after { width: 20px; left: 14px; background: #0078d4; }
.alert { background: #e08a80; }
.alert::after { background: #c42b1c; }
.av { position: absolute; right: 3px; top: 3px; width: 20px; height: 20px; border-radius: 50%; color: #d8f0f0; font-size: 11px; line-height: 20px; font-weight: 600; }
.teal { background: #0797a7; }
.purple { background: #512da8; color: #e0d8f8; }
.ring { background: #d8e2f4; border: 2px solid #3f6fc8; }
.ring svg { width: 16px; height: 16px; fill: none; stroke: #3f6fc8; stroke-width: 2; }
.tray { display: flex; align-items: center; justify-content: flex-end; gap: 18px; padding-right: 24px; }
.tray .mic { color: #1c5aa8; }
.sys { display: flex; gap: 8px; }
.tray time { width: 70px; padding-bottom: 3px; text-align: right; line-height: 20px; white-space: nowrap; font-size: 14px; }
```
